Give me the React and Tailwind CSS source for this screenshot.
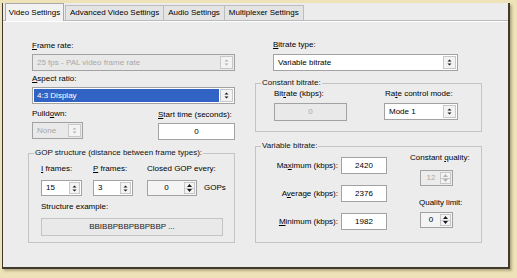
import React from 'react';

function Arrows({ dim }) {
  const c = dim ? '#b4b4b4' : '#1a1a1a';
  return (
    <svg width="5" height="7" viewBox="0 0 5 7">
      <path d="M2.5 0.5 L4.5 2.6 L0.5 2.6 Z" fill={c} />
      <path d="M0.5 4.4 L4.5 4.4 L2.5 6.5 Z" fill={c} />
    </svg>
  );
}

function Select({ value, w, disabled, selected }) {
  return (
    <div className={`flex h-[17px] shrink-0 ${w} border border-[#a2a2a2] p-[1px] ${disabled ? 'bg-[#e9e9e9]' : 'bg-white'}`}>
      <div
        className={`flex flex-1 items-center pl-[3px] ${
          selected ? 'bg-[#3163c5] text-white' : disabled ? 'text-[#a8a8a8]' : 'text-black'
        }`}
      >
        {value}
      </div>
      <div className="ml-[1px] flex w-[13px] items-center justify-center border border-[#c8c8c8] bg-[#f3f3f3]">
        <Arrows dim={disabled} />
      </div>
    </div>
  );
}

function SplitButton({ disabled }) {
  const c = disabled ? '#b4b4b4' : '#1a1a1a';
  return (
    <div className="flex w-[11px] shrink-0 flex-col border border-[#c8c8c8] bg-[#f3f3f3]">
      <div className="flex flex-1 items-center justify-center border-b border-[#c8c8c8]">
        <svg width="5" height="3" viewBox="0 0 5 3">
          <path d="M2.5 0 L5 3 L0 3 Z" fill={c} />
        </svg>
      </div>
      <div className="flex flex-1 items-center justify-center">
        <svg width="5" height="3" viewBox="0 0 5 3">
          <path d="M0 0 L5 0 L2.5 3 Z" fill={c} />
        </svg>
      </div>
    </div>
  );
}

function Spin({ value, w, split, center, disabled, tone = 'bg-white' }) {
  return (
    <div className={`flex h-[16px] shrink-0 ${w} border border-[#a2a2a2] p-[1px] ${tone}`}>
      <div
        className={`flex flex-1 items-center ${center ? 'justify-center' : 'pl-[3px]'} ${
          disabled ? 'text-[#a8a8a8]' : 'text-black'
        }`}
      >
        {value}
      </div>
      {split ? (
        <SplitButton disabled={disabled} />
      ) : (
        <div className="flex w-[11px] shrink-0 items-center justify-center border border-[#c8c8c8] bg-[#f3f3f3]">
          <Arrows dim={disabled} />
        </div>
      )}
    </div>
  );
}

function Field({ value, w, h = 'h-[17px]', disabled }) {
  return (
    <div
      className={`flex ${h} ${w} shrink-0 items-center justify-center border border-[#a2a2a2] ${
        disabled ? 'bg-[#e9e9e9] text-[#a8a8a8]' : 'bg-white text-black'
      }`}
    >
      {value}
    </div>
  );
}

function Group({ label, className, children }) {
  return (
    <div className={`relative border border-[#c4c4c4] ${className}`}>
      <span className="absolute -top-[6px] left-[5px] bg-[#ececec] px-[1px] leading-[10px] text-[#111]">
        {label}
      </span>
      {children}
    </div>
  );
}

function U({ children }) {
  return <span className="underline">{children}</span>;
}

export default function App() {
  const tabs = ['Advanced Video Settings', 'Audio Settings', 'Multiplexer Settings'];

  return (
    <div
      className="h-[278px] w-[517px] overflow-hidden bg-[#eee2b8] pl-[2px] pt-[3px] text-[8px] leading-[10px] text-black"
      style={{ fontFamily: '"Liberation Sans", Arial, sans-serif' }}
    >
      <div className="flex h-[266px] w-[508px] flex-col border-b-2 border-l border-r-2 border-[#3f3a2b] bg-[#ececec] shadow-[2px_2px_2px_rgba(80,70,40,0.35)]">
        {/* tab strip */}
        <div className="flex h-[18px] items-end border-b border-[#b9b9b9] pl-[2px]">
          <div className="relative z-10 -mb-[1px] flex h-[18px] w-[59px] items-center justify-center border border-b-0 border-[#a9a9a9] bg-[#f2f2f2]">
            Video Settings
          </div>
          {tabs.map((t, i) => (
            <div
              key={t}
              className={`flex h-[15px] items-center border-r border-t border-[#bdbdbd] bg-[#e4e4e4] px-[4px] ${
                i === 0 ? 'ml-[1px] border-l' : ''
              }`}
            >
              {t}
            </div>
          ))}
        </div>
        <div className="h-[1px] bg-white" />

        {/* body */}
        <div className="flex flex-1 pl-[25px]">
          {/* left column */}
          <div className="flex w-[207px] flex-col pt-[19px]">
            <div className="pl-[4px]">
              <div>
                <U>F</U>rame rate:
              </div>
              <div className="mt-[3px]">
                <Select value="25 fps - PAL video frame rate" w="w-[203px]" disabled />
              </div>
              <div className="mt-[3px]">
                <U>A</U>spect ratio:
              </div>
              <div className="mt-[3px]">
                <Select value="4:3 Display" w="w-[203px]" selected />
              </div>
              <div className="mt-[5px] flex items-start justify-between">
                <div>
                  <div>
                    Pulld<U>o</U>wn:
                  </div>
                  <div className="mt-[3px]">
                    <Select value="None" w="w-[51px]" disabled />
                  </div>
                </div>
                <div className="mt-[1px]">
                  <div>
                    <U>S</U>tart time (seconds):
                  </div>
                  <div className="mt-[3px]">
                    <Field value="0" w="w-[77px]" />
                  </div>
                </div>
              </div>
            </div>

            <Group label="GOP structure (distance between frame types):" className="mt-[13px] h-[90px] pl-[12px] pt-[10px]">
              <div className="flex">
                <div className="flex flex-col">
                  <div>
                    <U>I</U> frames:
                  </div>
                  <div className="mt-[6px]">
                    <Spin value="15" w="w-[41px]" />
                  </div>
                </div>
                <div className="ml-[11px] flex flex-col">
                  <div>
                    <U>P</U> frames:
                  </div>
                  <div className="mt-[6px]">
                    <Spin value="3" w="w-[40px]" />
                  </div>
                </div>
                <div className="ml-[14px] flex flex-col">
                  <div>Closed GOP every:</div>
                  <div className="mt-[6px] flex items-center">
                    <Spin value="0" w="w-[50px]" split center tone="bg-[#f4f4f4]" />
                    <span className="ml-[7px]">GOPs</span>
                  </div>
                </div>
              </div>
              <div className="mt-[6px]">Structure example:</div>
              <div className="mt-[6px] flex h-[18px] w-[182px] items-center justify-center border border-[#c4c4c4] bg-[#e9e9e9] text-[#222]">
                BBIBBPBBPBBPBBP ...
              </div>
            </Group>
          </div>

          {/* right column */}
          <div className="ml-[20px] flex w-[227px] flex-col pt-[18px]">
            <div className="pl-[18px]">
              <div>
                <U>B</U>itrate type:
              </div>
              <div className="mt-[4px]">
                <Select value="Variable bitrate" w="w-[185px]" />
              </div>
            </div>

            <Group label="Constant bitrate:" className="mt-[12px] h-[49px] pl-[18px] pt-[5px]">
              <div className="flex">
                <div>
                  <div>
                    Bit<U>r</U>ate (kbps):
                  </div>
                  <div className="mt-[4px]">
                    <Field value="0" w="w-[73px]" h="h-[18px]" disabled />
                  </div>
                </div>
                <div className="ml-[37px]">
                  <div className="pl-[1px]">
                    Ra<U>t</U>e control mode:
                  </div>
                  <div className="mt-[4px]">
                    <Select value="Mode 1" w="w-[74px]" />
                  </div>
                </div>
              </div>
            </Group>

            <Group label="Variable bitrate:" className="mt-[14px] h-[97px] pt-[10px]">
              <div className="flex">
                <div className="flex w-[131px] flex-col items-end gap-[11px]">
                  <div className="flex items-center">
                    <span className="mr-[3px]">
                      Ma<U>x</U>imum (kbps):
                    </span>
                    <Field value="2420" w="w-[46px]" />
                  </div>
                  <div className="flex items-center">
                    <span className="mr-[3px]">
                      A<U>v</U>erage (kbps):
                    </span>
                    <Field value="2376" w="w-[46px]" />
                  </div>
                  <div className="flex items-center">
                    <span className="mr-[3px]">
                      <U>M</U>inimum (kbps):
                    </span>
                    <Field value="1982" w="w-[46px]" />
                  </div>
                </div>
                <div className="-mt-[4px] ml-[23px] flex w-[66px] flex-col">
                  <div>
                    Constant <U>q</U>uality:
                  </div>
                  <div className="mt-[7px] flex pl-[10px]">
                    <Spin value="12" w="w-[33px]" split center disabled tone="bg-[#ececec]" />
                  </div>
                  <div className="mt-[12px] pl-[9px]">Quality limit:</div>
                  <div className="mt-[4px] flex pl-[10px]">
                    <Spin value="0" w="w-[33px]" split center tone="bg-[#f4f4f4]" />
                  </div>
                </div>
              </div>
            </Group>
          </div>
        </div>
      </div>
    </div>
  );
}
